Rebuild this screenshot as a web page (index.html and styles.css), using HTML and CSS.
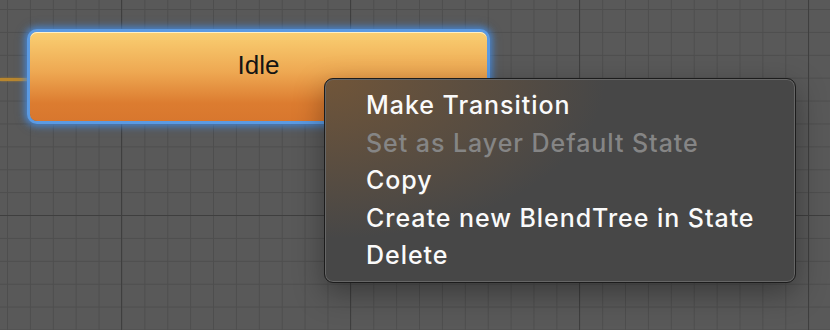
FILE: index.html
```html
<!DOCTYPE html>
<html lang="en">
  <head>
    <meta charset="UTF-8" />
    <title>Animator</title>
    <link rel="stylesheet" href="styles.css">
  </head>
  <body>
    <div class="graph">
      <!-- incoming transition from the entry node -->
      <div class="transition"></div>

      <div class="state-node">
        <span class="state-name">Idle</span>
      </div>

      <ul class="context-menu">
        <li>Make Transition</li>
        <li class="disabled">Set as Layer Default State</li>
        <li>Copy</li>
        <li>Create new BlendTree in State</li>
        <li>Delete</li>
      </ul>
    </div>
  </body>
</html>
```

FILE: styles.css
```css
body {
  margin: 0;
  padding: 0;
  background-color: #595959;
}

.graph {
  position: relative;
  width: 830px;
  height: 330px;
  overflow: hidden;
  background-color: #595959;
  background-image:
    linear-gradient(to right, #3f3f3f 1px, transparent 1px),
    linear-gradient(to bottom, #3f3f3f 1px, transparent 1px),
    linear-gradient(to right, #4e4e4e 1px, transparent 1px),
    linear-gradient(to bottom, #4e4e4e 1px, transparent 1px);
  background-size: 229px 229px, 229px 229px, 22.9px 22.9px, 22.9px 22.9px;
  background-position: 121px 0, 0 215px, 7px 0, 0 9px;
}

.transition {
  position: absolute;
  left: 0;
  top: 78px;
  width: 32px;
  height: 3px;
  background-color: #b8862e;
  box-shadow: 0 0 2px #b8862e;
}

.state-node {
  position: absolute;
  left: 30px;
  top: 32px;
  width: 457px;
  height: 89px;
  box-sizing: border-box;
  border-radius: 7px;
  background: linear-gradient(to bottom, #f9cf72 0%, #eea852 45%, #dc7c30 80%, #d8772e 100%);
  box-shadow:
    inset 0 1px 0 #fff1c8,
    0 0 0 3px #5b9ae2,
    0 0 6px 5px rgba(70, 140, 225, 0.75),
    0 0 12px 4px rgba(70, 140, 225, 0.35);
  text-align: center;
  padding-top: 19px;
}

.state-name {
  font-family: "Liberation Sans", Arial, sans-serif;
  font-size: 26px;
  line-height: 28px;
  color: #141414;
}

.context-menu {
  position: absolute;
  left: 324px;
  top: 78px;
  width: 472px;
  height: 205px;
  box-sizing: border-box;
  margin: 0;
  padding: 8px 0 9px 41px;
  list-style: none;
  border-radius: 9px;
  border: 1px solid #1c1c1c;
  background-color: #474747;
  background-image:
    radial-gradient(ellipse 280px 160px at 0% 0%, rgba(115, 86, 56, 0.95), rgba(115, 86, 56, 0) 100%);
  box-shadow:
    inset 0 0 0 1px #666,
    0 10px 30px rgba(0, 0, 0, 0.35);
  font-family: Inter, "Noto Sans", sans-serif;
  font-size: 25px;
  font-weight: 500;
  letter-spacing: 0.95px;
  line-height: 37.5px;
  color: #fafafa;
}

.context-menu li {
  white-space: nowrap;
}

.context-menu .disabled {
  color: #858585;
}
```
